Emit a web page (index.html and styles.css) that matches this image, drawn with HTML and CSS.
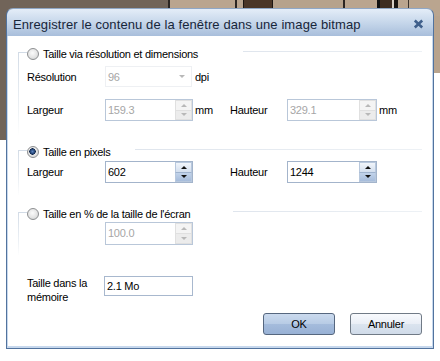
FILE: index.html
```html
<!DOCTYPE html>
<html lang="fr">
<head>
    <meta charset="UTF-8">
    <meta name="viewport" content="width=device-width, initial-scale=1.0">
    <title>Image bitmap</title>
    <link rel="stylesheet" href="styles.css">
</head>
<body>
    <div class="window">
        <div class="titlebar">
            <span class="title">Enregistrer le contenu de la fenêtre dans une image bitmap</span>
            <svg class="close" width="11" height="10" viewBox="0 0 11 10">
                <path d="M1.8 1.5 L9.2 8.5 M9.2 1.5 L1.8 8.5" />
            </svg>
        </div>

        <div class="client">
            <div class="group g1">
                <div class="group-head">
                    <span class="stub"></span>
                    <span class="radio"></span>
                    <span class="head-label">Taille via résolution et dimensions</span>
                    <span class="head-line"></span>
                </div>
                <div class="row row-res">
                    <span>Résolution</span>
                    <div class="combo"><span>96</span><span class="combo-arrow"></span></div>
                    <span class="unit">dpi</span>
                </div>
                <div class="row row-dim">
                    <span>Largeur</span>
                    <div class="spin disabled">
                        <span class="spin-val">159.3</span>
                        <span class="spin-btns"><span class="up"></span><span class="down"></span></span>
                    </div>
                    <span class="unit">mm</span>
                    <span>Hauteur</span>
                    <div class="spin disabled">
                        <span class="spin-val">329.1</span>
                        <span class="spin-btns"><span class="up"></span><span class="down"></span></span>
                    </div>
                    <span class="unit">mm</span>
                </div>
            </div>

            <div class="group g2">
                <div class="group-head">
                    <span class="stub"></span>
                    <span class="radio checked"></span>
                    <span class="head-label">Taille en pixels</span>
                    <span class="head-line"></span>
                </div>
                <div class="row row-px">
                    <span>Largeur</span>
                    <div class="spin">
                        <span class="spin-val">602</span>
                        <span class="spin-btns"><span class="up"></span><span class="down"></span></span>
                    </div>
                    <span class="unit"></span>
                    <span>Hauteur</span>
                    <div class="spin">
                        <span class="spin-val">1244</span>
                        <span class="spin-btns"><span class="up"></span><span class="down"></span></span>
                    </div>
                </div>
            </div>

            <div class="group g3">
                <div class="group-head">
                    <span class="stub"></span>
                    <span class="radio"></span>
                    <span class="head-label">Taille en % de la taille de l'écran</span>
                    <span class="head-line"></span>
                </div>
                <div class="row row-pct">
                    <span></span>
                    <div class="spin disabled tall">
                        <span class="spin-val">100.0</span>
                        <span class="spin-btns"><span class="up"></span><span class="down"></span></span>
                    </div>
                </div>
            </div>

            <div class="mem">
                <span class="mem-label">Taille dans la mémoire</span>
                <div class="textbox">2.1 Mo</div>
            </div>

            <div class="buttons">
                <button class="btn default">OK</button>
                <button class="btn">Annuler</button>
            </div>
        </div>
    </div>
</body>
</html>
```

FILE: styles.css
```css
* {
    margin: 0;
    padding: 0;
    box-sizing: border-box;
}

body {
    background:
        linear-gradient(to right,
            #716459 0 168px, #2b2522 168px 170px, #baa58f 170px 235px,
            #2b2522 235px 237px, #baa58f 237px 243px, #1d1612 243px 244px,
            #4a3526 244px 272px, #1d1612 272px 273px, #b6a28c 273px 343px,
            #2b2522 343px 345px, #baa58f 345px 377px, #111 377px 380px,
            #3d2c21 380px 392px, #d8d0c6 392px 394px, #1a1512 394px 398px,
            #baa58f 398px 408px, #3a322c 408px 409px, #baa58f 409px) left top / 100% 16px no-repeat,
        linear-gradient(#716459, #716459) left top / 6px 140px no-repeat,
        linear-gradient(#b8a38d, #b8a38d) right top / 6px 73px no-repeat,
        #fff;
    font-family: 'Liberation Sans', Arial, sans-serif;
    font-size: 11px;
    letter-spacing: -0.25px;
    color: #000;
}

.window {
    width: 428px;
    height: 341px;
    margin: 8px 0 0 6px;
    border: 1px solid #52739e;
    border-top-color: #8fa7c6;
    border-radius: 7px 7px 0 0;
    background: linear-gradient(#e4edf8, #c5d6ea 14px, #a8bedb 27px, #c7d8ed 27px);
    display: flex;
    flex-direction: column;
}

.titlebar {
    height: 27px;
    display: flex;
    align-items: flex-start;
    padding-left: 6px;
}

.title {
    margin-top: 8px;
    font-size: 13px;
    line-height: 15px;
    letter-spacing: 0.1px;
    color: #17263a;
}

.close {
    margin: 10px 9px 0 auto;
}

.close path {
    stroke: #3f5f8b;
    stroke-width: 2.6;
    fill: none;
}

.client {
    flex: 1;
    background-color: #fff;
    margin: 0 1px 2px;
    padding: 16px 10px 0 10px;
    display: flex;
    flex-direction: column;
}

.group {
    display: flex;
    flex-direction: column;
    border-left: 1px solid;
    border-image: linear-gradient(#d2dbe6, #eef2f6 70%, rgba(255,255,255,0)) 1;
}

.g1 {
    padding-bottom: 14px;
}

.g2 {
    margin-top: 15px;
    padding-bottom: 12px;
}

.g3 {
    margin-top: 17px;
    padding-bottom: 10px;
}

.group-head {
    display: flex;
    align-items: center;
    height: 12px;
    margin-top: -4px;
}

.stub {
    width: 8px;
    height: 1px;
    align-self: flex-start;
    margin-top: 4px;
    background-color: #d2dbe6;
}

.radio {
    width: 12px;
    height: 12px;
    border: 1px solid #8d8f91;
    border-radius: 50%;
    background: radial-gradient(circle at 45% 40%, #fbfbfb, #e4e4e4 55%, #cdcfd1);
}

.radio.checked {
    background:
        radial-gradient(circle at 45% 45%, #5d86c2 0, #1f3e6e 2.4px, #0f2649 3px, transparent 3.4px),
        radial-gradient(circle at 45% 40%, #fbfbfb, #e4e4e4 55%, #cdcfd1);
}

.head-label {
    margin-left: 4px;
    flex: none;
}

.g1 .head-label { width: 200px; }
.g2 .head-label { width: 92px; }
.g3 .head-label { width: 190px; }

.head-line {
    flex: 1;
    height: 1px;
    align-self: flex-start;
    margin-top: 3px;
    background: linear-gradient(to right, #dfe5ed, #edf1f5);
}

.row {
    display: grid;
    grid-template-columns: 78px 88px 37px 57px 90px auto;
    align-items: center;
    padding-left: 8px;
}

.row-res {
    margin-top: 6px;
    height: 21px;
}

.row-dim {
    margin-top: 12px;
}

.row-px {
    margin-top: 3px;
}

.row-pct {
    margin-top: 2px;
}

.unit {
    padding-left: 2px;
}

.combo {
    width: 87px;
    height: 21px;
    border: 1px solid #eef0f3;
    display: flex;
    align-items: center;
    justify-content: space-between;
    padding: 0 6px 0 2px;
    color: #a6a6a6;
}

.combo-arrow {
    border-left: 3px solid transparent;
    border-right: 3px solid transparent;
    border-top: 3px solid #b8b8b8;
}

.spin {
    height: 22px;
    border: 1px solid #a3b4cb;
    display: flex;
}

.spin.tall {
    height: 23px;
}

.spin-val {
    flex: 1;
    padding: 2px 0 0 2px;
    line-height: 16px;
}

.spin.disabled {
    border-color: #b9c7d9;
}

.spin.disabled .spin-val {
    color: #a6a6a6;
}

.spin-btns {
    width: 17px;
    display: flex;
    flex-direction: column;
}

.spin-btns span {
    flex: 1;
    display: flex;
    align-items: center;
    justify-content: center;
    border: 1px solid #b8c8dd;
}

.spin-btns .up {
    background: linear-gradient(#f1f5fb, #d3dfee);
    border-bottom-color: #9fb3ce;
}

.spin-btns .down {
    background: linear-gradient(#c2d3ea, #a6bcdb);
    border-top: none;
}

.spin-btns .up::after {
    content: '';
    border-left: 3px solid transparent;
    border-right: 3px solid transparent;
    border-bottom: 3px solid #111;
}

.spin-btns .down::after {
    content: '';
    border-left: 3px solid transparent;
    border-right: 3px solid transparent;
    border-top: 3px solid #111;
}

.spin.disabled .spin-btns span {
    background: #f4f4f4;
    border-color: #e0e0e0;
}

.spin.disabled .spin-btns .down {
    background: #ececec;
}

.spin.disabled .spin-btns .up::after {
    border-bottom-color: #b8b8b8;
}

.spin.disabled .spin-btns .down::after {
    border-top-color: #b8b8b8;
}

.mem {
    display: grid;
    grid-template-columns: 77px 89px;
    margin: 21px 0 0 9px;
}

.mem-label {
    line-height: 14px;
}

.textbox {
    height: 20px;
    border: 1px solid #a8b8ce;
    padding-left: 2px;
    line-height: 18px;
}

.buttons {
    display: flex;
    justify-content: flex-end;
    gap: 15px;
    margin-top: 9px;
}

.btn {
    width: 72px;
    height: 22px;
    font-family: inherit;
    font-size: 11px;
    letter-spacing: -0.25px;
    color: #000;
    border: 1px solid #707a86;
    border-radius: 3px;
    background: linear-gradient(#f8fafd, #e9eef6 50%, #dbe4ef 50%, #d0dbe9);
}

.btn.default {
    border-color: #56677f;
    background: linear-gradient(#cbdaee, #b7cbe5 50%, #a5bcdc 50%, #98b1d5);
}
```
